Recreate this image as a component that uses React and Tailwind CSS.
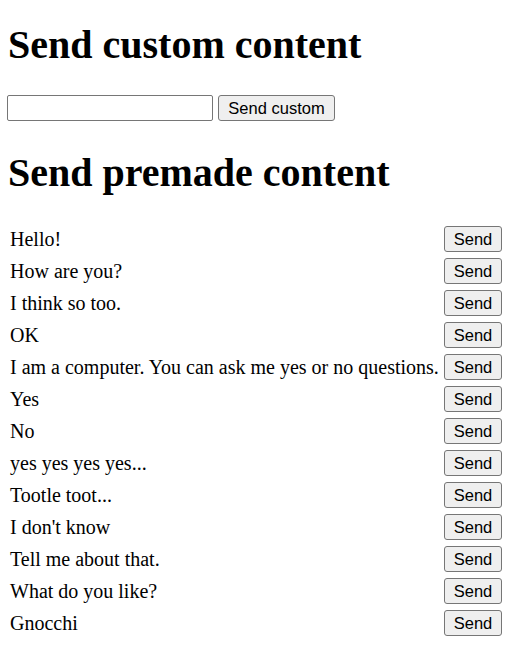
const premade = [
  "Hello!",
  "How are you?",
  "I think so too.",
  "OK",
  "I am a computer. You can ask me yes or no questions.",
  "Yes",
  "No",
  "yes yes yes yes...",
  "Tootle toot...",
  "I don't know",
  "Tell me about that.",
  "What do you like?",
  "Gnocchi",
]

const btn = "h-[26px] bg-[#efefef] border border-[#767676] rounded-[3px] text-[16.5px] text-black leading-none font-['Liberation_Sans',Arial,sans-serif]"

export default function App() {
  return (
    <div className="min-h-[658px] bg-white text-black px-[10px] pt-[22px] font-['Liberation_Serif','Times_New_Roman',serif]">
      <h1 className="text-[40px] leading-[46px] font-bold -ml-[2px]">Send custom content</h1>
      <div className="flex items-center gap-[5px] mt-[27px] -ml-[3px]">
        <input className="w-[206px] h-[26px] border border-[#767676] rounded-[2px] bg-white" />
        <button className={`${btn} w-[117px]`}>Send custom</button>
      </div>
      <h1 className="text-[40px] leading-[46px] font-bold mt-[29px] -ml-[2px]">Send premade content</h1>
      <div className="mt-[27px] flex flex-col">
        {premade.map((text, i) => (
          <div key={i} className="flex items-center h-[32px]">
            <span className="w-[434px] text-[20px] leading-[24px]">{text}</span>
            <button className={`${btn} w-[58px]`}>Send</button>
          </div>
        ))}
      </div>
    </div>
  )
}
